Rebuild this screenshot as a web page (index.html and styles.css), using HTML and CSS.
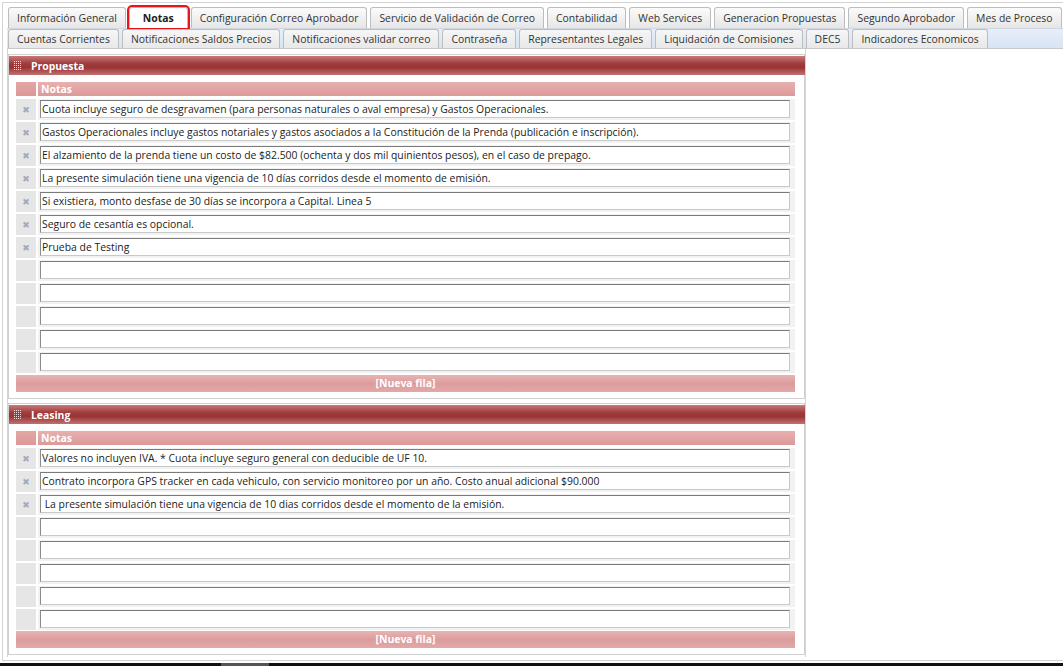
FILE: index.html
```html
<!DOCTYPE html>
<html>
<head>
<meta charset="utf-8">
<link rel="stylesheet" href="styles.css">
</head>
<body>
<div class="frame">
  <div class="tabs">
    <div class="tabrow row1">
      <div class="tab">Información General</div>
      <div class="tab active">Notas</div>
      <div class="tab">Configuración Correo Aprobador</div>
      <div class="tab">Servicio de Validación de Correo</div>
      <div class="tab">Contabilidad</div>
      <div class="tab">Web Services</div>
      <div class="tab">Generacion Propuestas</div>
      <div class="tab">Segundo Aprobador</div>
      <div class="tab">Mes de Proceso</div>
    </div>
    <div class="tabrow row2">
      <div class="tab">Cuentas Corrientes</div>
      <div class="tab">Notificaciones Saldos Precios</div>
      <div class="tab">Notificaciones validar correo</div>
      <div class="tab">Contraseña</div>
      <div class="tab">Representantes Legales</div>
      <div class="tab">Liquidación de Comisiones</div>
      <div class="tab">DEC5</div>
      <div class="tab">Indicadores Economicos</div>
    </div>
  </div>
  <div class="content">
    <div class="section">
      <div class="sec-head"><svg class="grip" width="7" height="9" viewBox="0 0 7 9"><g fill="#f3dada"><rect x="0" y="0" width="1" height="1"/><rect x="2" y="0" width="1" height="1"/><rect x="4" y="0" width="1" height="1"/><rect x="6" y="0" width="1" height="1"/><rect x="0" y="2" width="1" height="1"/><rect x="2" y="2" width="1" height="1"/><rect x="4" y="2" width="1" height="1"/><rect x="6" y="2" width="1" height="1"/><rect x="0" y="4" width="1" height="1"/><rect x="2" y="4" width="1" height="1"/><rect x="4" y="4" width="1" height="1"/><rect x="6" y="4" width="1" height="1"/><rect x="0" y="6" width="1" height="1"/><rect x="2" y="6" width="1" height="1"/><rect x="4" y="6" width="1" height="1"/><rect x="6" y="6" width="1" height="1"/><rect x="0" y="8" width="1" height="1"/><rect x="2" y="8" width="1" height="1"/><rect x="4" y="8" width="1" height="1"/><rect x="6" y="8" width="1" height="1"/></g></svg>Propuesta</div>
      <div class="grid">
        <div class="ghead"><div class="gc0"></div><div class="gc1">Notas</div></div>
        <div class="grow"><div class="del">✖</div><div class="cell"><div class="inp">Cuota incluye seguro de desgravamen (para personas naturales o aval empresa) y Gastos Operacionales.</div></div></div>
        <div class="grow"><div class="del">✖</div><div class="cell"><div class="inp">Gastos Operacionales incluye gastos notariales y gastos asociados a la Constitución de la Prenda (publicación e inscripción).</div></div></div>
        <div class="grow"><div class="del">✖</div><div class="cell"><div class="inp">El alzamiento de la prenda tiene un costo de $82.500 (ochenta y dos mil quinientos pesos), en el caso de prepago.</div></div></div>
        <div class="grow"><div class="del">✖</div><div class="cell"><div class="inp">La presente simulación tiene una vigencia de 10 días corridos desde el momento de emisión.</div></div></div>
        <div class="grow"><div class="del">✖</div><div class="cell"><div class="inp">Si existiera, monto desfase de 30 días se incorpora a Capital. Linea 5</div></div></div>
        <div class="grow"><div class="del">✖</div><div class="cell"><div class="inp">Seguro de cesantía es opcional.</div></div></div>
        <div class="grow"><div class="del">✖</div><div class="cell"><div class="inp">Prueba de Testing</div></div></div>
        <div class="grow"><div class="del"></div><div class="cell"><div class="inp"></div></div></div>
        <div class="grow"><div class="del"></div><div class="cell"><div class="inp"></div></div></div>
        <div class="grow"><div class="del"></div><div class="cell"><div class="inp"></div></div></div>
        <div class="grow"><div class="del"></div><div class="cell"><div class="inp"></div></div></div>
        <div class="grow"><div class="del"></div><div class="cell"><div class="inp"></div></div></div>
        <div class="newrow">[Nueva fila]</div>
      </div>
    </div>
    <div class="section">
      <div class="sec-head"><svg class="grip" width="7" height="9" viewBox="0 0 7 9"><g fill="#f3dada"><rect x="0" y="0" width="1" height="1"/><rect x="2" y="0" width="1" height="1"/><rect x="4" y="0" width="1" height="1"/><rect x="6" y="0" width="1" height="1"/><rect x="0" y="2" width="1" height="1"/><rect x="2" y="2" width="1" height="1"/><rect x="4" y="2" width="1" height="1"/><rect x="6" y="2" width="1" height="1"/><rect x="0" y="4" width="1" height="1"/><rect x="2" y="4" width="1" height="1"/><rect x="4" y="4" width="1" height="1"/><rect x="6" y="4" width="1" height="1"/><rect x="0" y="6" width="1" height="1"/><rect x="2" y="6" width="1" height="1"/><rect x="4" y="6" width="1" height="1"/><rect x="6" y="6" width="1" height="1"/><rect x="0" y="8" width="1" height="1"/><rect x="2" y="8" width="1" height="1"/><rect x="4" y="8" width="1" height="1"/><rect x="6" y="8" width="1" height="1"/></g></svg>Leasing</div>
      <div class="grid">
        <div class="ghead"><div class="gc0"></div><div class="gc1">Notas</div></div>
        <div class="grow"><div class="del">✖</div><div class="cell"><div class="inp">Valores no incluyen IVA. * Cuota incluye seguro general con deducible de UF 10.</div></div></div>
        <div class="grow"><div class="del">✖</div><div class="cell"><div class="inp">Contrato incorpora GPS tracker en cada vehiculo, con servicio monitoreo por un año. Costo anual adicional $90.000</div></div></div>
        <div class="grow"><div class="del">✖</div><div class="cell"><div class="inp"> La presente simulación tiene una vigencia de 10 dias corridos desde el momento de la emisión.</div></div></div>
        <div class="grow"><div class="del"></div><div class="cell"><div class="inp"></div></div></div>
        <div class="grow"><div class="del"></div><div class="cell"><div class="inp"></div></div></div>
        <div class="grow"><div class="del"></div><div class="cell"><div class="inp"></div></div></div>
        <div class="grow"><div class="del"></div><div class="cell"><div class="inp"></div></div></div>
        <div class="grow"><div class="del"></div><div class="cell"><div class="inp"></div></div></div>
        <div class="newrow last">[Nueva fila]</div>
      </div>
    </div>
  </div>
</div>
<div class="taskbar"><div class="tb-item"></div></div>
</body>
</html>
```
FILE: styles.css
```css
* { box-sizing: border-box; }
html, body { margin: 0; padding: 0; background: #fff; }
body {
  width: 1063px;
  height: 666px;
  overflow: hidden;
  font-family: "Open Sans", "DejaVu Sans", sans-serif;
  font-size: 10.4px;
  color: #222;
  position: relative;
}
.frame {
  margin: 2px 0 0 2px;
  height: 659px;
  border: 1px solid #d4d4d4;
  border-right: none;
  padding: 4px 0 0 4px;
}
.tabs { border-bottom: 1px solid #c8c8c8; }
.tabrow { display: flex; gap: 3px; padding-left: 1px; }
.row1 { height: 21px; }
.row2 {
  height: 20px;
  background: linear-gradient(#e6eef9, #d8e4f4);
  border-top: 1px solid #cfd6e0;
}
.tab {
  border: 1px solid #bdbdbd;
  border-bottom: none;
  border-radius: 3px 3px 0 0;
  background: linear-gradient(#fbfbfb, #e6e6e6);
  padding: 0 8px;
  display: flex;
  align-items: center;
  color: #333;
  white-space: nowrap;
}
.row2 .tab { background: linear-gradient(#f6f6f6, #e8e8e8); padding: 0 8px; }
.tab.active {
  background: #fff;
  font-weight: bold;
  color: #222;
  outline: 2px solid #e8141c;
  outline-offset: 0;
  padding: 0 13px;
}
.content {
  width: 799px;
  border-left: 1px solid #d4d4d4;
  border-right: 1px solid #d4d4d4;
  padding: 5px 0 0 0;
  height: 608px;
}
.section {
  border: 1px solid #d0d0d0;
  margin-bottom: 4px;
  padding: 1px 0 6px 0;
}
.sec-head {
  height: 19px;
  background: linear-gradient(#c77a7a, #a13c3c 40%, #9a3434 60%, #c27070);
  color: #fff;
  font-weight: bold;
  display: flex;
  align-items: center;
  padding-left: 5px;
  margin-right: -1px;
}
.grip { margin-right: 10px; display: block; }
.grid {
  margin: 7px 9px 0 7px;
  display: flex;
  flex-direction: column;
  gap: 2px;
}
.ghead { display: flex; gap: 2px; height: 14px; margin-bottom: 1px; }
.gc0 { width: 20px; background: linear-gradient(#e4a6a6, #dc9898); }
.gc1 {
  flex: 1;
  background: linear-gradient(#e8b0b0, #dc9a9a);
  color: #fff;
  font-weight: bold;
  padding-left: 3px;
  display: flex;
  align-items: center;
}
.grow { display: flex; gap: 2px; height: 21px; }
.del {
  width: 20px;
  background: #e6e6e6;
  color: #a4a9c0;
  font-size: 9px;
  display: flex;
  align-items: center;
  justify-content: center;
}
.cell {
  flex: 1;
  background: #f2f2f2;
  padding: 1px 5px 2px 2px;
}
.inp {
  height: 18px;
  background: #fff;
  border: 1px solid #c9c9c9;
  border-top-color: #7a7a7a;
  border-left-color: #8a8a8a;
  padding-left: 1px;
  line-height: 16px;
  color: #222;
  white-space: pre;
  overflow: hidden;
}
.newrow {
  height: 17px;
  background: linear-gradient(#e8b4b4, #dc9c9c 50%, #e4a8a8);
  color: #fff;
  font-weight: bold;
  text-align: center;
  line-height: 17px;
}
.newrow.last { margin-top: -1px; }
.taskbar {
  position: absolute;
  left: 0;
  bottom: 0;
  width: 1063px;
  height: 3px;
  background: #111;
}
.tb-item {
  position: absolute;
  left: 221px;
  width: 48px;
  height: 3px;
  background: #555;
}
```
